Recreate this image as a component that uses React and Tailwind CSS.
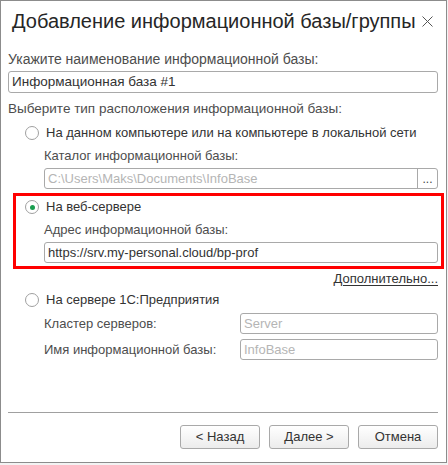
const font = { fontFamily: '"Liberation Sans", Arial, sans-serif' };

function Radio({ checked, children }) {
  return (
    <div className="flex items-center h-4">
      <span className="w-[14px] h-[14px] rounded-full border border-[#a0a0a0] bg-white flex items-center justify-center shrink-0">
        {checked && <span className="w-[5px] h-[5px] rounded-full bg-[#1a9e50]" />}
      </span>
      <span className="ml-[7px] text-[13px] leading-4 text-[#333] whitespace-nowrap">{children}</span>
    </div>
  );
}

function Field({ value, muted, className = "" }) {
  return (
    <div
      className={`h-[21px] border border-[#a9a9a9] rounded-[3px] bg-white flex items-center px-[3px] text-[13px] leading-4 ${
        muted ? "text-[#b5b5b5]" : "text-[#333]"
      } ${className}`}
    >
      {value}
    </div>
  );
}

function Button({ children }) {
  return (
    <button className="w-[80px] h-[24px] border border-[#a9a9a9] rounded-[3px] bg-gradient-to-b from-white to-[#ececec] text-[13px] text-[#333] leading-4">
      {children}
    </button>
  );
}

export default function App() {
  return (
    <div className="w-[448px] h-[465px] bg-[#f3f3f3] overflow-hidden" style={font}>
      <div className="w-[447px] h-[463px] bg-white border border-[#8c8c8c] flex flex-col">
        {/* Title */}
        <div className="h-[40px] flex items-center justify-between pl-[11px] pr-[13px]">
          <span className="text-[20px] leading-6 text-[#262626]">
            Добавление информационной базы/группы
          </span>
          <svg width="11" height="11" viewBox="0 0 11 11">
            <path d="M0.5 0.5 L10.5 10.5 M10.5 0.5 L0.5 10.5" stroke="#555" strokeWidth="1" />
          </svg>
        </div>

        <div className="flex flex-col flex-1 pl-[7px] pr-[8px]">
          <div className="mt-[10px] text-[14px] leading-4 text-[#4d4d4d]">
            Укажите наименование информационной базы:
          </div>
          <div className="mt-[4px] h-[22px] border border-[#a9a9a9] rounded-[3px] flex items-center px-[3px] text-[13.5px] text-[#333]">
            Информационная база #1
          </div>

          <div className="mt-[8px] text-[13.5px] leading-4 text-[#4d4d4d]">
            Выберите тип расположения информационной базы:
          </div>

          <div className="mt-[8px] ml-[17px]">
            <Radio>На данном компьютере или на компьютере в локальной сети</Radio>
          </div>
          <div className="mt-[7px] ml-[36px] text-[13px] leading-4 text-[#4d4d4d]">
            Каталог информационной базы:
          </div>
          <div className="mt-[4px] ml-[36px] h-[21px] border border-[#a9a9a9] rounded-[3px] flex text-[13px] leading-4">
            <div className="flex-1 flex items-center px-[3px] text-[#b5b5b5]">
              C:\Users\Maks\Documents\InfoBase
            </div>
            <div className="w-[20px] border-l border-[#a9a9a9] flex items-center justify-center text-[#444] text-[12px]">
              ...
            </div>
          </div>

          {/* Highlighted web server option */}
          <div className="mt-[4px] ml-[5px] w-[431px] shrink-0 border-[3px] border-[#ff0000] pt-[3px] pb-[3px]">
            <div className="ml-[9px]">
              <Radio checked>На веб-сервере</Radio>
            </div>
            <div className="mt-[7px] ml-[28px] text-[13px] leading-4 text-[#4d4d4d]">
              Адрес информационной базы:
            </div>
            <Field className="mt-[4px] ml-[28px] w-[394px]" value="https://srv.my-personal.cloud/bp-prof" />
          </div>

          <div className="mt-[2px] flex justify-end">
            <span className="text-[13px] leading-4 text-[#333] underline underline-offset-2">
              Дополнительно...
            </span>
          </div>

          <div className="mt-[5px] ml-[17px]">
            <Radio>На сервере 1С:Предприятия</Radio>
          </div>

          <div className="mt-[5px] ml-[36px] flex items-center">
            <span className="w-[196px] text-[13px] leading-4 text-[#4d4d4d]">Кластер серверов:</span>
            <Field className="flex-1" value="Server" muted />
          </div>
          <div className="mt-[5px] ml-[36px] flex items-center">
            <span className="w-[196px] text-[13px] leading-4 text-[#4d4d4d]">Имя информационной базы:</span>
            <Field className="flex-1" value="InfoBase" muted />
          </div>

          <div className="mt-auto h-px bg-[#a0a0a0]" />
          <div className="mt-[12px] mb-[13px] flex justify-end gap-[9px]">
            <Button>&lt; Назад</Button>
            <Button>Далее &gt;</Button>
            <Button>Отмена</Button>
          </div>
        </div>
      </div>
    </div>
  );
}
